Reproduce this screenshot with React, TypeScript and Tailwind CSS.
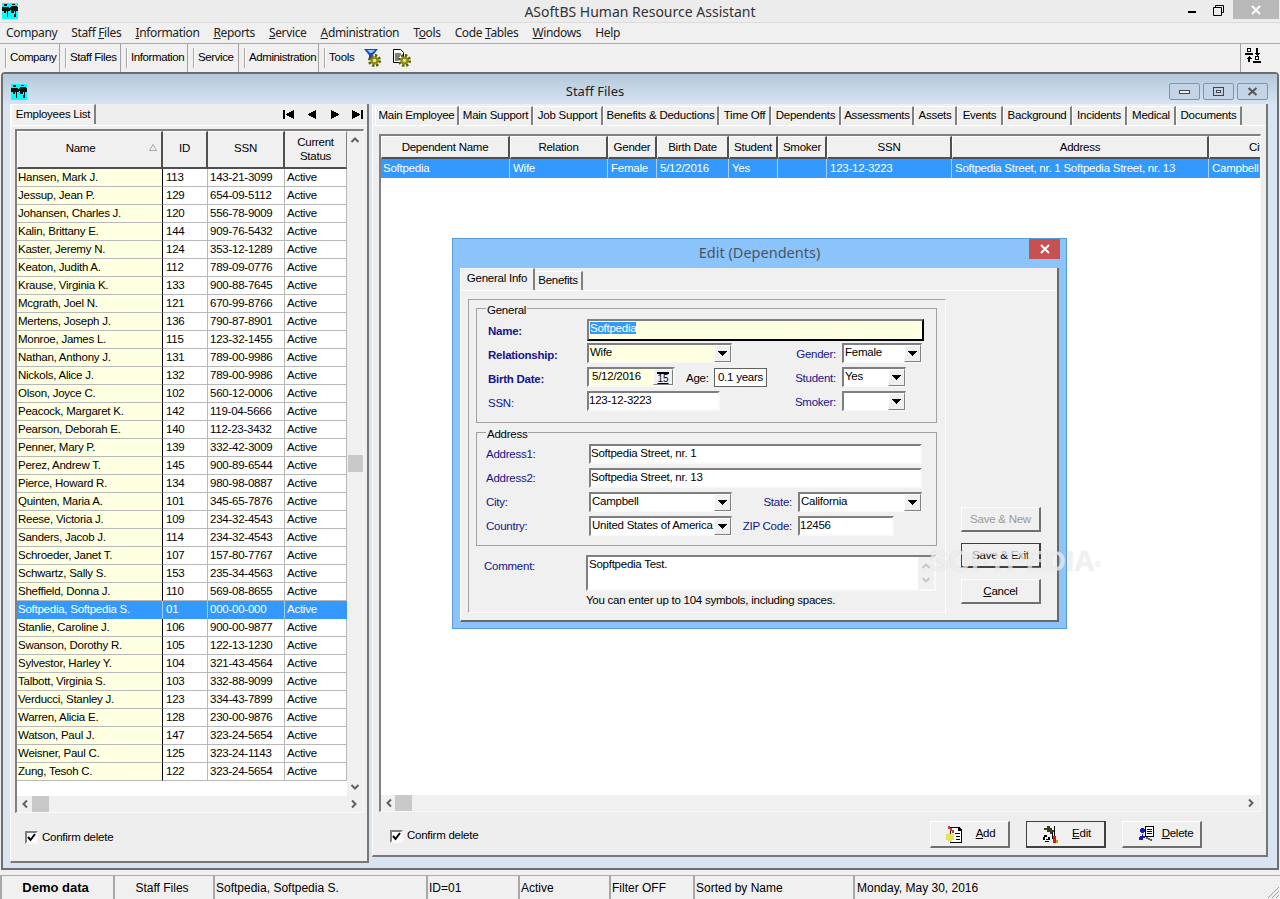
import React from 'react';

const sunken = 'border-2 border-t-[#7f7f7f] border-l-[#7f7f7f] border-r-[#f9f9f9] border-b-[#f9f9f9]';
const raised = 'border border-t-white border-l-white border-r-[#808080] border-b-[#808080]';

const employees = [
  ['Hansen, Mark J.', '113', '143-21-3099'],
  ['Jessup, Jean P.', '129', '654-09-5112'],
  ['Johansen, Charles J.', '120', '556-78-9009'],
  ['Kalin, Brittany E.', '144', '909-76-5432'],
  ['Kaster, Jeremy N.', '124', '353-12-1289'],
  ['Keaton, Judith A.', '112', '789-09-0776'],
  ['Krause, Virginia K.', '133', '900-88-7645'],
  ['Mcgrath, Joel N.', '121', '670-99-8766'],
  ['Mertens, Joseph J.', '136', '790-87-8901'],
  ['Monroe, James L.', '115', '123-32-1455'],
  ['Nathan, Anthony J.', '131', '789-00-9986'],
  ['Nickols, Alice J.', '132', '789-00-9986'],
  ['Olson, Joyce C.', '102', '560-12-0006'],
  ['Peacock, Margaret K.', '142', '119-04-5666'],
  ['Pearson, Deborah E.', '140', '112-23-3432'],
  ['Penner, Mary P.', '139', '332-42-3009'],
  ['Perez, Andrew T.', '145', '900-89-6544'],
  ['Pierce, Howard R.', '134', '980-98-0887'],
  ['Quinten, Maria A.', '101', '345-65-7876'],
  ['Reese, Victoria J.', '109', '234-32-4543'],
  ['Sanders, Jacob J.', '114', '234-32-4543'],
  ['Schroeder, Janet T.', '107', '157-80-7767'],
  ['Schwartz, Sally S.', '153', '235-34-4563'],
  ['Sheffield, Donna J.', '110', '569-08-8655'],
  ['Softpedia, Softpedia S.', '01', '000-00-000'],
  ['Stanlie, Caroline J.', '106', '900-00-9877'],
  ['Swanson, Dorothy R.', '105', '122-13-1230'],
  ['Sylvestor, Harley Y.', '104', '321-43-4564'],
  ['Talbott, Virginia S.', '103', '332-88-9099'],
  ['Verducci, Stanley J.', '123', '334-43-7899'],
  ['Warren, Alicia E.', '128', '230-00-9876'],
  ['Watson, Paul J.', '147', '323-24-5654'],
  ['Weisner, Paul C.', '125', '323-24-1143'],
  ['Zung, Tesoh C.', '122', '323-24-5654'],
];

const rightTabs: [string, number][] = [
  ['Main Employee', 84],
  ['Main Support', 74],
  ['Job Support', 70],
  ['Benefits & Deductions', 116],
  ['Time Off', 52],
  ['Dependents', 70],
  ['Assessments', 73],
  ['Assets', 43],
  ['Events', 46],
  ['Background', 69],
  ['Incidents', 55],
  ['Medical', 49],
  ['Documents', 66],
];

const depCols: [string, string, number][] = [
  ['Dependent Name', 'Softpedia', 129],
  ['Relation', 'Wife', 98],
  ['Gender', 'Female', 49],
  ['Birth Date', '5/12/2016', 72],
  ['Student', 'Yes', 49],
  ['Smoker', '', 49],
  ['SSN', '123-12-3223', 125],
  ['Address', 'Softpedia Street, nr. 1 Softpedia Street, nr. 13', 257],
  ['City', 'Campbell', 80],
];

function AppIcon() {
  return (
    <svg width="16" height="16" viewBox="0 0 16 16" className="shrink-0" shapeRendering="crispEdges">
      <rect width="16" height="16" fill="#00ffff" />
      <path d="M0 4h7v1h1v3H6v6H5V8H4v2H2V8H0z" fill="#111" />
      <path d="M9 3h6v1h1v4h-2v6h-2l1-6h-1v2H9V7H8V4h1z" fill="#111" />
      <path d="M2 1h3v2H2zM10 1h3v1h-3z" fill="#111" />
    </svg>
  );
}

function Chevron({ dir, color = '#606060' }: { dir: 'up' | 'down' | 'left' | 'right'; color?: string }) {
  const d = {
    up: 'M1.5 7 L5 3.5 L8.5 7',
    down: 'M1.5 3 L5 6.5 L8.5 3',
    left: 'M7 1.5 L3.5 5 L7 8.5',
    right: 'M3 1.5 L6.5 5 L3 8.5',
  }[dir];
  return (
    <svg width="10" height="10" viewBox="0 0 10 10" className="shrink-0">
      <path d={d} fill="none" stroke={color} strokeWidth="2" />
    </svg>
  );
}

function NavArrow({ d }: { d: string }) {
  return (
    <svg width="12" height="9" viewBox="0 0 12 9" shapeRendering="crispEdges">
      <path d={d} fill="#000" />
    </svg>
  );
}

function Tab({ label, width, height = 19 }: { label: string; width: number; height?: number }) {
  return (
    <div
      style={{ width, height }}
      className="flex items-center justify-center whitespace-nowrap bg-[#f0f0f0] border-t border-l border-white border-r-2 border-r-[#808080]"
    >
      {label}
    </div>
  );
}

function Arrow() {
  return (
    <div className={`w-[17px] h-full bg-[#f0f0f0] flex items-center justify-center shrink-0 ${raised}`}>
      <svg width="9" height="5" viewBox="0 0 9 5" shapeRendering="crispEdges">
        <path d="M0 0h9v1H8v1H7v1H6v1H5v1H4V4H3V3H2V2H1V1H0z" fill="#000" />
      </svg>
    </div>
  );
}

function Combo({ value, width, yellow }: { value: string; width: number; yellow?: boolean }) {
  return (
    <div
      style={{ width }}
      className={`h-[20px] flex items-stretch shrink-0 border-t-2 border-l-2 border-r border-b border-t-[#7f7f7f] border-l-[#7f7f7f] border-r-[#f9f9f9] border-b-[#f9f9f9] ${yellow ? 'bg-[#ffffe1]' : 'bg-white'}`}
    >
      <div className="flex-1 pl-[1px] leading-[14px] whitespace-nowrap overflow-hidden">{value}</div>
      <Arrow />
    </div>
  );
}

function Input({ value, width, yellow }: { value: string; width: number; yellow?: boolean }) {
  return (
    <div style={{ width }} className={`h-[20px] leading-[14px] whitespace-nowrap shrink-0 ${sunken} ${yellow ? 'bg-[#ffffe1]' : 'bg-white'}`}>
      {value}
    </div>
  );
}

function Label({ children, width, bold, right, pad }: { children: React.ReactNode; width: number; bold?: boolean; right?: boolean; pad?: string }) {
  return (
    <div style={{ width }} className={`shrink-0 text-[#14148c] ${bold ? 'font-bold' : ''} ${right ? 'text-right pr-[6px]' : ''} ${pad ?? ''}`}>
      {children}
    </div>
  );
}

function DialogButton({ children, disabled, isDefault }: { children: React.ReactNode; disabled?: boolean; isDefault?: boolean }) {
  return (
    <div
      className={`w-[80px] h-[25px] flex items-center justify-center pt-[2px] bg-[#f0f0f0] border ${
        isDefault ? 'border-[#404040] border-r-2 border-b-2' : 'border-t-white border-l-white border-r-[#707070] border-b-[#707070] border-r-2 border-b-2'
      } ${disabled ? 'text-[#9a9a9a]' : ''}`}
    >
      {children}
    </div>
  );
}

function CheckRow() {
  return (
    <div className="flex items-center gap-[4px]">
      <div className={`w-[13px] h-[13px] bg-white flex items-center justify-center ${sunken} border`}>
        <svg width="9" height="9" viewBox="0 0 9 9">
          <path d="M1 4 L3.5 7 L8 1" fill="none" stroke="#000" strokeWidth="2" />
        </svg>
      </div>
      <span>Confirm delete</span>
    </div>
  );
}

function HScroll({ thumbLeft }: { thumbLeft: string }) {
  return (
    <div className="h-[16px] bg-[#f0f0f0] flex items-center pl-[3px] pr-[4px]">
      <Chevron dir="left" />
      <div className={`w-[17px] h-[16px] bg-[#c9c9c9] shrink-0 ${thumbLeft}`} />
      <div className="flex-1" />
      <Chevron dir="right" />
    </div>
  );
}

function ToolGroup({ label, width }: { label: string; width: number }) {
  return (
    <div style={{ width }} className="h-full flex items-center pl-[5px] gap-[3px] whitespace-nowrap tracking-[-0.4px] border-r border-[#a0a0a0] shrink-0">
      <div className="w-[2px] h-[20px] border-l border-[#a8a8a8] bg-white" />
      <span>{label}</span>
    </div>
  );
}

function StatusCell({ children, width, center, bold }: { children: React.ReactNode; width: number; center?: boolean; bold?: boolean }) {
  return (
    <div
      style={{ width }}
      className={`h-full flex items-center shrink-0 border-l-2 border-t border-[#a8a8a8] text-[12px] tracking-normal whitespace-nowrap ${center ? 'justify-center pr-[4px]' : 'pl-[1px]'} ${bold ? 'font-bold text-[13px]' : ''}`}
    >
      {children}
    </div>
  );
}

function Gear({ cx, cy }: { cx: number; cy: number }) {
  return (
    <g>
      <circle cx={cx} cy={cy} r="5" fill="none" stroke="#5c5c00" strokeWidth="3" strokeDasharray="2.2 1.7" />
      <circle cx={cx} cy={cy} r="4" fill="#8c8c10" />
      <circle cx={cx} cy={cy} r="1.8" fill="#e4e4a0" />
    </g>
  );
}

function FilterGear() {
  return (
    <svg width="18" height="18" viewBox="0 0 18 18">
      <path d="M0 0H14L9 6V10H5V6Z" fill="#1c3fd0" />
      <path d="M3 1H11L8 4H6Z" fill="#7fd0ff" />
      <Gear cx={10.5} cy={11.5} />
    </svg>
  );
}

function DocGear() {
  return (
    <svg width="18" height="18" viewBox="0 0 18 18">
      <path d="M0.5 0.5H7.5L10.5 3.5V13.5H0.5Z" fill="#fff" stroke="#000" />
      <path d="M2 5H8M2 7H7M2 9H6M2 11H5" stroke="#000" />
      <Gear cx={11.5} cy={11.5} />
    </svg>
  );
}

function UsersSwap() {
  return (
    <svg width="16" height="16" viewBox="0 0 16 16" shapeRendering="crispEdges">
      <path d="M2 0h4v4H2zM0 5h8v2H0z" fill="#000" />
      <path d="M3 1h2v2H3z" fill="#f0f0f0" />
      <path d="M11 0h2v5h2l-3 3-3-3h2z" fill="#000" />
      <path d="M3 14h2v-3h2L4 8 1 11h2z" fill="#000" />
      <path d="M10 8h4v4h-4zM8 13h8v2H8z" fill="#000" />
      <path d="M11 9h2v2h-2z" fill="#f0f0f0" />
    </svg>
  );
}

function AddIcon() {
  return (
    <svg width="17" height="17" viewBox="0 0 17 17" shapeRendering="crispEdges">
      <path d="M4 1h9l3 3v13H4z" fill="#000" />
      <path d="M5 2h7v3h3v11H5z" fill="#fff" />
      <path d="M9 7h5v1H9zM10 10h4v1h-4zM10 13h4v1h-4z" fill="#000" />
      <path d="M0 8h8v6H6v2H2v-2H0z" fill="#e8e060" />
      <path d="M2 0h2v2h2v2h2v3H6V5H4V3H2z" fill="#c04040" />
    </svg>
  );
}

function EditIcon() {
  return (
    <svg width="17" height="17" viewBox="0 0 17 17" shapeRendering="crispEdges">
      <path d="M2 2h3V0h3v2h2v2h2v2h-2v2H8V6H5V4H2z" fill="#3b3b1e" />
      <path d="M10 6l1 0v7h-1z" fill="#000" />
      <path d="M12 0h1v10h-1z" fill="#000" />
      <path d="M11 10h3v7h-3z" fill="#d01818" />
      <path d="M14 14h2v3h-2z" fill="#c8a018" />
      <path d="M2 9h3v2H4v2h2v-2h2v3H7v2H3v-2H1v-3h1z" fill="#000" />
      <path d="M3 11h1v3h3v1H3z" fill="#fff" />
    </svg>
  );
}

function DeleteIcon() {
  return (
    <svg width="17" height="17" viewBox="0 0 17 17" shapeRendering="crispEdges">
      <path d="M7 0h9v11H7z" fill="#000" />
      <path d="M8 1h7v9H8z" fill="#fff" />
      <path d="M9 3h5v1H9zM9 5h5v1H9zM9 7h5v1H9z" fill="#000" />
      <path d="M3 2h3v1h1v3H6v2H4v2H2v1H1v3h4v-2h2v-2H5V8h1V7H3V6H2V3h1z" fill="#1a1ac0" />
      <path d="M8 11h2v1h2v1h2v2h-2v-1h-2v-1H8z" fill="#606060" />
    </svg>
  );
}

function ActionButton({ icon, children, isDefault }: { icon: React.ReactNode; children: React.ReactNode; isDefault?: boolean }) {
  return (
    <div
      className={`w-[80px] h-[27px] flex items-center bg-[#f0f0f0] pl-[15px] ${
        isDefault
          ? 'border border-[#404040] border-r-2 border-b-2'
          : 'border border-t-white border-l-white border-r-2 border-b-2 border-r-[#707070] border-b-[#707070]'
      }`}
    >
      {icon}
      <span className="flex-1 text-center px-[6px]">{children}</span>
    </div>
  );
}

function EmployeesPanel() {
  return (
    <div className="w-[359px] shrink-0 flex flex-col bg-[#eeeeee] border-r-2 border-b-2 border-[#777777] border-l border-l-white">
      <div className="h-[21px] flex items-end justify-between relative">
        <div className="pb-[1px] bg-[#f0f0f0]">
          <Tab label="Employees List" width={85} height={20} />
        </div>
        <div className="flex items-center gap-[11px] h-full pr-[3px]">
          <NavArrow d="M0 0h2v9H0zM3 4h1V3h2V2h2V1h2V0h1v9h-1V8H8V7H6V6H4V5H3z" />
          <NavArrow d="M2 4h1V3h2V2h2V1h2V0h1v9H9V8H7V7H5V6H3V5H2z" />
          <NavArrow d="M2 0h1v1h2v1h2v1h2v1h1v1H9v1H7v1H5v1H3v1H2z" />
          <NavArrow d="M0 0h1v1h2v1h2v1h2v1h1v1H7v1H5v1H3v1H1v1H0zM9 0h2v9H9z" />
        </div>
      </div>
      <div className="pl-[4px] pr-[4px] pt-[3px] border-t border-white">
        <div className="w-[349px] h-[684px] flex flex-col border-t-2 border-l-2 border-[#808080] border-r border-b border-r-[#f8f8f8] border-b-[#f8f8f8]">
          <div className="flex flex-1 min-h-0">
            <div className="w-[330px] bg-white">
              <div className="flex h-[38px] bg-[#f0f0f0] text-center">
                <div className="w-[146px] relative flex items-center justify-center pr-[18px] pb-[1px] border-r-2 border-b-2 border-[#505050] border-t border-t-white border-l border-l-white">
                  Name
                  <svg width="8" height="7" viewBox="0 0 8 7" className="absolute right-[4px] top-[12px]">
                    <path d="M0.5 6.5 L4 0.5 L7.5 6.5 Z" fill="none" stroke="#a8a8a8" />
                  </svg>
                </div>
                <div className="w-[45px] flex items-center justify-center pb-[1px] border-r-2 border-b-2 border-[#505050] border-t border-t-white">ID</div>
                <div className="w-[77px] flex items-center justify-center pb-[1px] border-r-2 border-b-2 border-[#505050] border-t border-t-white">SSN</div>
                <div className="w-[62px] flex items-center justify-center pb-[1px] leading-[14px] border-b-2 border-[#505050] border-t border-t-white border-r border-r-[#808080]">
                  Current
                  <br />
                  Status
                </div>
              </div>
              {employees.map(([name, id, ssn]) => {
                const selected = id === '01';
                return (
                  <div key={name} className={`flex h-[18px] items-center ${selected ? 'bg-[#3399ff] text-white' : ''}`}>
                    <div className={`w-[146px] h-full pl-[1px] leading-[17px] border-r border-b ${selected ? 'border-r-[#a6cff8] border-b-[#3399ff]' : 'bg-[#ffffe1] border-r-black border-b-[#b8b8b8]'}`}>{name}</div>
                    <div className={`w-[45px] h-full pl-[3px] leading-[17px] border-r border-b ${selected ? 'border-[#a6cff8] border-b-[#3399ff]' : 'border-[#b8b8b8]'}`}>{id}</div>
                    <div className={`w-[77px] h-full pl-[2px] leading-[17px] border-r border-b ${selected ? 'border-[#a6cff8] border-b-[#3399ff]' : 'border-[#b8b8b8]'}`}>{ssn}</div>
                    <div className={`w-[62px] h-full pl-[2px] leading-[17px] border-r border-b ${selected ? 'border-[#3399ff]' : 'border-[#b8b8b8]'}`}>Active</div>
                  </div>
                );
              })}
            </div>
            <div className="w-[18px] bg-[#f0f0f0] flex flex-col items-center py-[4px] relative">
              <Chevron dir="up" />
              <div className="h-[310px] shrink-0" />
              <div className="w-[15px] h-[17px] bg-[#c9c9c9] shrink-0" />
              <div className="flex-1" />
              <Chevron dir="down" />
            </div>
          </div>
          <HScroll thumbLeft="ml-[2px]" />
        </div>
      </div>
      <div className="pl-[14px] pt-[16px] pb-[15px]">
        <CheckRow />
      </div>
    </div>
  );
}

function DependentsPanel() {
  return (
    <div className="w-[896px] shrink-0 flex flex-col bg-[#eeeeee] border-r-2 border-b-2 border-[#777777] border-l border-l-white">
      <div className="h-[21px] pl-[2px] flex items-end">
        {rightTabs.map(([label, w]) => (
          <div key={label} className="pt-[1px]">
            <Tab label={label} width={w} />
          </div>
        ))}
      </div>
      <div className="pl-[6px] pr-[5px] pt-[8px] border-t border-white">
        <div className="h-[678px] flex flex-col border-t-2 border-l-2 border-[#808080] border-r border-b border-r-[#f8f8f8] border-b-[#f8f8f8]">
          <div className="flex-1 min-h-0 bg-white overflow-hidden">
            <div className="flex h-[23px] bg-[#f0f0f0]">
              {depCols.map(([head, , w]) => (
                <div key={head} style={{ width: w }} className="shrink-0 flex items-center justify-center pt-[1px] border-r-2 border-b-2 border-[#505050] border-t border-t-white border-l border-l-white">
                  {head === 'City' ? <span className="w-full pl-[39px] overflow-hidden">Cit</span> : head}
                </div>
              ))}
            </div>
            <div className="flex h-[19px] bg-[#3399ff] text-white">
              {depCols.map(([head, val, w], i) => (
                <div key={head} style={{ width: w }} className={`shrink-0 leading-[18px] whitespace-nowrap border-r border-[#a6cff8] ${i === 0 ? 'pl-[2px]' : 'pl-[3px]'}`}>
                  {val}
                </div>
              ))}
            </div>
          </div>
          <HScroll thumbLeft="ml-[1px]" />
        </div>
      </div>
      <div className="flex items-center justify-between pl-[17px] pr-[64px] pt-[9px] pb-[7px]">
        <div className="pt-[3px]">
          <CheckRow />
        </div>
        <div className="flex gap-[16px]">
          <ActionButton icon={<AddIcon />}>
            <u>A</u>dd
          </ActionButton>
          <ActionButton icon={<EditIcon />} isDefault>
            <u>E</u>dit
          </ActionButton>
          <ActionButton icon={<DeleteIcon />}>
            <u>D</u>elete
          </ActionButton>
        </div>
      </div>
    </div>
  );
}

function EditDialog() {
  return (
    <div className="absolute left-[452px] top-[238px] w-[615px] h-[391px] bg-[#8ac4fb] border border-[#5b9bd5] flex flex-col">
      <div className="h-[29px] shrink-0 relative flex items-center justify-center text-[14.5px] tracking-normal text-[#4a5460] font-['Noto_Sans',sans-serif]">
        <span className="-mt-[1px]">Edit (Dependents)</span>
        <div className="absolute right-[6px] top-0 w-[31px] h-[20px] bg-[#c75050] flex items-center justify-center">
          <svg width="10" height="10" viewBox="0 0 10 10">
            <path d="M1 1 L9 9 M9 1 L1 9" stroke="#fff" strokeWidth="2" />
          </svg>
        </div>
      </div>
      <div className="mx-[7px] flex-1 mb-[6px] bg-[#f0f0f0] flex flex-col border-r-2 border-b-2 border-[#696969] border-l border-l-white">
        <div className="h-[22px] flex items-end shrink-0">
          <div className="w-[74px] h-[22px] flex items-center justify-center pb-[1px] border-t border-white border-r-2 border-r-[#808080]">General Info</div>
          <div className="w-[48px] h-[19px] flex items-center justify-center border-t border-white border-r-2 border-r-[#808080]">Benefits</div>
        </div>
        <div className="flex border-t border-white pl-[7px] pt-[8px]">
          <div className="w-[478px] h-[314px] border border-[#a0a0a0] border-r-white border-b-white pl-[7px] pt-[8px] pr-[8px]">
            <div className="relative h-[115px] border border-[#a0a0a0] pt-[8px] leading-[14px]">
              <span className="absolute -top-[6px] left-[9px] bg-[#f0f0f0] px-[1px]">General</span>
              <div className="flex items-center h-[24px]">
                <Label width={110} bold pad="pl-[11px] pt-[4px]">Name:</Label>
                <div className="w-[337px] h-[22px] mt-[2px] border-2 border-t-[#7f7f7f] border-l-[#7f7f7f] border-r-black border-b-black bg-[#ffffe1] leading-[14px] pl-[1px]">
                  <span className="bg-[#3399ff] text-white">Softpedia</span>
                </div>
              </div>
              <div className="flex items-center h-[24px]">
                <Label width={110} bold pad="pl-[11px] pt-[4px]">Relationship:</Label>
                <Combo value="Wife" width={145} yellow />
                <Label width={110} right pad="pt-[2px]">Gender:</Label>
                <Combo value="Female" width={80} />
              </div>
              <div className="flex items-center h-[24px]">
                <Label width={110} bold pad="pl-[11px] pt-[4px]">Birth Date:</Label>
                <div className={`w-[88px] h-[20px] flex items-stretch shrink-0 bg-[#ffffe1] ${sunken}`}>
                  <span className="flex-1 pl-[3px] leading-[14px]">5/12/2016</span>
                  <div className={`w-[20px] bg-[#f0f0f0] flex items-center justify-center text-[10px] tracking-normal ${raised}`}>
                    <span className="border-t-2 border-black leading-[9px] underline">15</span>
                  </div>
                </div>
                <span className="ml-[11px] w-[28px] shrink-0 pt-[2px]">Age:</span>
                <div className="w-[53px] h-[19px] border border-[#606060] bg-white leading-[16px] text-center shrink-0">0.1 years</div>
                <Label width={75} right pad="pt-[2px]">Student:</Label>
                <Combo value="Yes" width={64} />
              </div>
              <div className="flex items-center h-[24px]">
                <Label width={110} pad="pl-[11px] pt-[4px]">SSN:</Label>
                <Input value="123-12-3223" width={133} />
                <Label width={122} right pad="pt-[2px]">Smoker:</Label>
                <Combo value="" width={64} />
              </div>
            </div>
            <div className="relative h-[114px] mt-[9px] border border-[#a0a0a0] pt-[9px] leading-[14px]">
              <span className="absolute -top-[6px] left-[9px] bg-[#f0f0f0] px-[1px]">Address</span>
              <div className="flex items-center h-[24px]">
                <Label width={112} pad="pl-[9px]">Address1:</Label>
                <Input value="Softpedia Street, nr. 1" width={333} />
              </div>
              <div className="flex items-center h-[24px]">
                <Label width={112} pad="pl-[9px]">Address2:</Label>
                <Input value="Softpedia Street, nr. 13" width={333} />
              </div>
              <div className="flex items-center h-[24px]">
                <Label width={112} pad="pl-[9px]">City:</Label>
                <Combo value="Campbell" width={143} />
                <Label width={66} right>State:</Label>
                <Combo value="California" width={124} />
              </div>
              <div className="flex items-center h-[24px]">
                <Label width={112} pad="pl-[9px]">Country:</Label>
                <Combo value="United States of America" width={143} />
                <Label width={66} right>ZIP Code:</Label>
                <Input value="12456" width={96} />
              </div>
            </div>
            <div className="flex mt-[9px] leading-[14px]">
              <Label width={110} pad="pl-[8px] pt-[4px]">Comment:</Label>
              <div className={`w-[350px] h-[36px] flex ${sunken} bg-white`}>
                <div className="flex-1 pl-[1px] leading-[14px]">Sopftpedia Test.</div>
                <div className="w-[16px] bg-[#f0f0f0] flex flex-col items-center justify-between py-[4px]">
                  <Chevron dir="up" color="#c8c8c8" />
                  <Chevron dir="down" color="#c8c8c8" />
                </div>
              </div>
            </div>
            <div className="pl-[110px] leading-[16px] pt-[1px]">You can enter up to 104 symbols, including spaces.</div>
          </div>
          <div className="ml-[15px] pt-[208px] flex flex-col gap-[11px]">
            <DialogButton disabled>Save &amp; New</DialogButton>
            <DialogButton isDefault>Save &amp; Exit</DialogButton>
            <DialogButton>
              <span>
                <u>C</u>ancel
              </span>
            </DialogButton>
          </div>
        </div>
      </div>
      <span className="absolute left-[476px] top-[306px] text-[29px] leading-[32px] tracking-normal font-bold text-white/70 [text-shadow:0_0_1px_rgb(0_0_0/0.18)] pointer-events-none">
        SOFTPEDIA
        <sup className="text-[8px] font-normal">®</sup>
      </span>
    </div>
  );
}

export default function App() {
  return (
    <div className="relative w-[1280px] h-[899px] overflow-hidden flex flex-col bg-[#f0f0f0] text-[11.5px] tracking-[-0.25px] text-black font-['Liberation_Sans',sans-serif]">
      {/* Title bar */}
      <div className="h-[22px] shrink-0 bg-[#ececec] grid grid-cols-[1fr_auto_1fr] items-center">
        <div className="pl-[2px]">
          <AppIcon />
        </div>
        <div className="text-[14px] tracking-normal text-[#333] font-['Noto_Sans',sans-serif]">ASoftBS Human Resource Assistant</div>
        <div className="flex justify-end items-start h-full">
          <div className="w-[8px] h-[2px] bg-black mt-[11px] mr-[17px]" />
          <svg width="11" height="11" viewBox="0 0 11 11" className="mt-[5px] mr-[9px]">
            <path d="M2.5 2.5V0.5H10.5V7.5H8.5M0.5 2.5H8.5V10.5H0.5Z" fill="none" stroke="#000" />
          </svg>
          <div className="w-[46px] h-[19px] bg-[#b9b9b9] flex items-center justify-center mr-[1px]">
            <svg width="10" height="10" viewBox="0 0 10 10">
              <path d="M1 1 L9 9 M9 1 L1 9" stroke="#fff" strokeWidth="2" />
            </svg>
          </div>
        </div>
      </div>

      {/* Menu */}
      <div className="h-[22px] shrink-0 flex items-center pl-[6px] gap-[14px] border-t border-b border-t-[#dcdcdc] border-b-[#a8a8a8] text-[12px] tracking-[-0.35px] text-[#222] font-['Noto_Sans',sans-serif]">
        <span>Company</span>
        <span>Staff <u>F</u>iles</span>
        <span><u>I</u>nformation</span>
        <span><u>R</u>eports</span>
        <span><u>S</u>ervice</span>
        <span><u>A</u>dministration</span>
        <span>T<u>o</u>ols</span>
        <span>Code <u>T</u>ables</span>
        <span><u>W</u>indows</span>
        <span>Help</span>
      </div>

      {/* Toolbar */}
      <div className="h-[28px] shrink-0 flex items-center">
        <ToolGroup label="Company" width={60} />
        <ToolGroup label="Staff Files" width={61} />
        <ToolGroup label="Information" width={67} />
        <ToolGroup label="Service" width={51} />
        <ToolGroup label="Administration" width={80} />
        <div className="h-full flex items-center pl-[5px] gap-[3px]">
          <div className="w-[2px] h-[20px] border-l border-[#a8a8a8] bg-white" />
          <span className="mr-[6px]">Tools</span>
          <FilterGear />
          <span className="w-[5px]" />
          <DocGear />
        </div>
        <div className="flex-1" />
        <div className="h-full w-[40px] border-l border-[#a0a0a0] pl-[4px] pt-[4px]">
          <UsersSwap />
        </div>
      </div>

      {/* Staff Files window */}
      <div className="h-[798px] shrink-0 mx-[1px] flex flex-col border-2 border-[#6e6e6e] rounded-tl-[4px] rounded-tr-[4px] bg-[#d8e4f2]">
        <div className="h-[30px] shrink-0 bg-gradient-to-b from-[#b4c8dc] to-[#d6e4f2] flex items-center relative pl-[8px] pt-[6px]">
          <AppIcon />
          <div className="absolute left-0 right-[90px] top-[8px] text-center text-[13px] tracking-normal text-[#222] font-['Noto_Sans',sans-serif]">Staff Files</div>
          <div className="absolute right-[9px] top-[9px] flex gap-[3px]">
            <div className="w-[31px] h-[17px] rounded-[2px] border border-[#7f93ad] bg-[#c4d4e8] flex items-center justify-center">
              <div className="w-[11px] h-[4px] border border-[#444] bg-[#eee]" />
            </div>
            <div className="w-[31px] h-[17px] rounded-[2px] border border-[#7f93ad] bg-[#c4d4e8] flex items-center justify-center">
              <div className="w-[11px] h-[9px] border border-[#444] flex items-center justify-center">
                <div className="w-[5px] h-[3px] border border-[#444] bg-[#eee]" />
              </div>
            </div>
            <div className="w-[31px] h-[17px] rounded-[2px] border border-[#7f93ad] bg-[#c4d4e8] flex items-center justify-center">
              <svg width="11" height="9" viewBox="0 0 11 9">
                <path d="M1.5 1 L9.5 8 M9.5 1 L1.5 8" stroke="#555" strokeWidth="2" />
              </svg>
            </div>
          </div>
        </div>
        <div className="flex-1 flex items-start gap-[3px] pl-[7px] min-h-0">
          <EmployeesPanel />
          <DependentsPanel />
        </div>
        <div className="h-[9px] shrink-0" />
      </div>

      {/* Status bar */}
      <div className="mt-[5px] h-[24px] shrink-0 flex">
        <StatusCell width={113} center bold>Demo data</StatusCell>
        <StatusCell width={100} center>Staff Files</StatusCell>
        <StatusCell width={213}>Softpedia, Softpedia S.</StatusCell>
        <StatusCell width={92}>ID=01</StatusCell>
        <StatusCell width={91}>Active</StatusCell>
        <StatusCell width={84}>Filter OFF</StatusCell>
        <StatusCell width={160}>Sorted by Name</StatusCell>
        <div className="w-[427px] h-full flex items-center justify-between shrink-0 border-l-2 border-t border-[#a8a8a8] text-[12px] tracking-normal pl-[2px] whitespace-nowrap">
          <span>Monday, May 30, 2016</span>
          <svg width="14" height="14" viewBox="0 0 14 14" className="self-end">
            <path d="M13 2 L2 13 M13 6 L6 13 M13 10 L10 13" stroke="#a0a0a0" fill="none" />
          </svg>
        </div>
      </div>

      <EditDialog />
    </div>
  );
}
